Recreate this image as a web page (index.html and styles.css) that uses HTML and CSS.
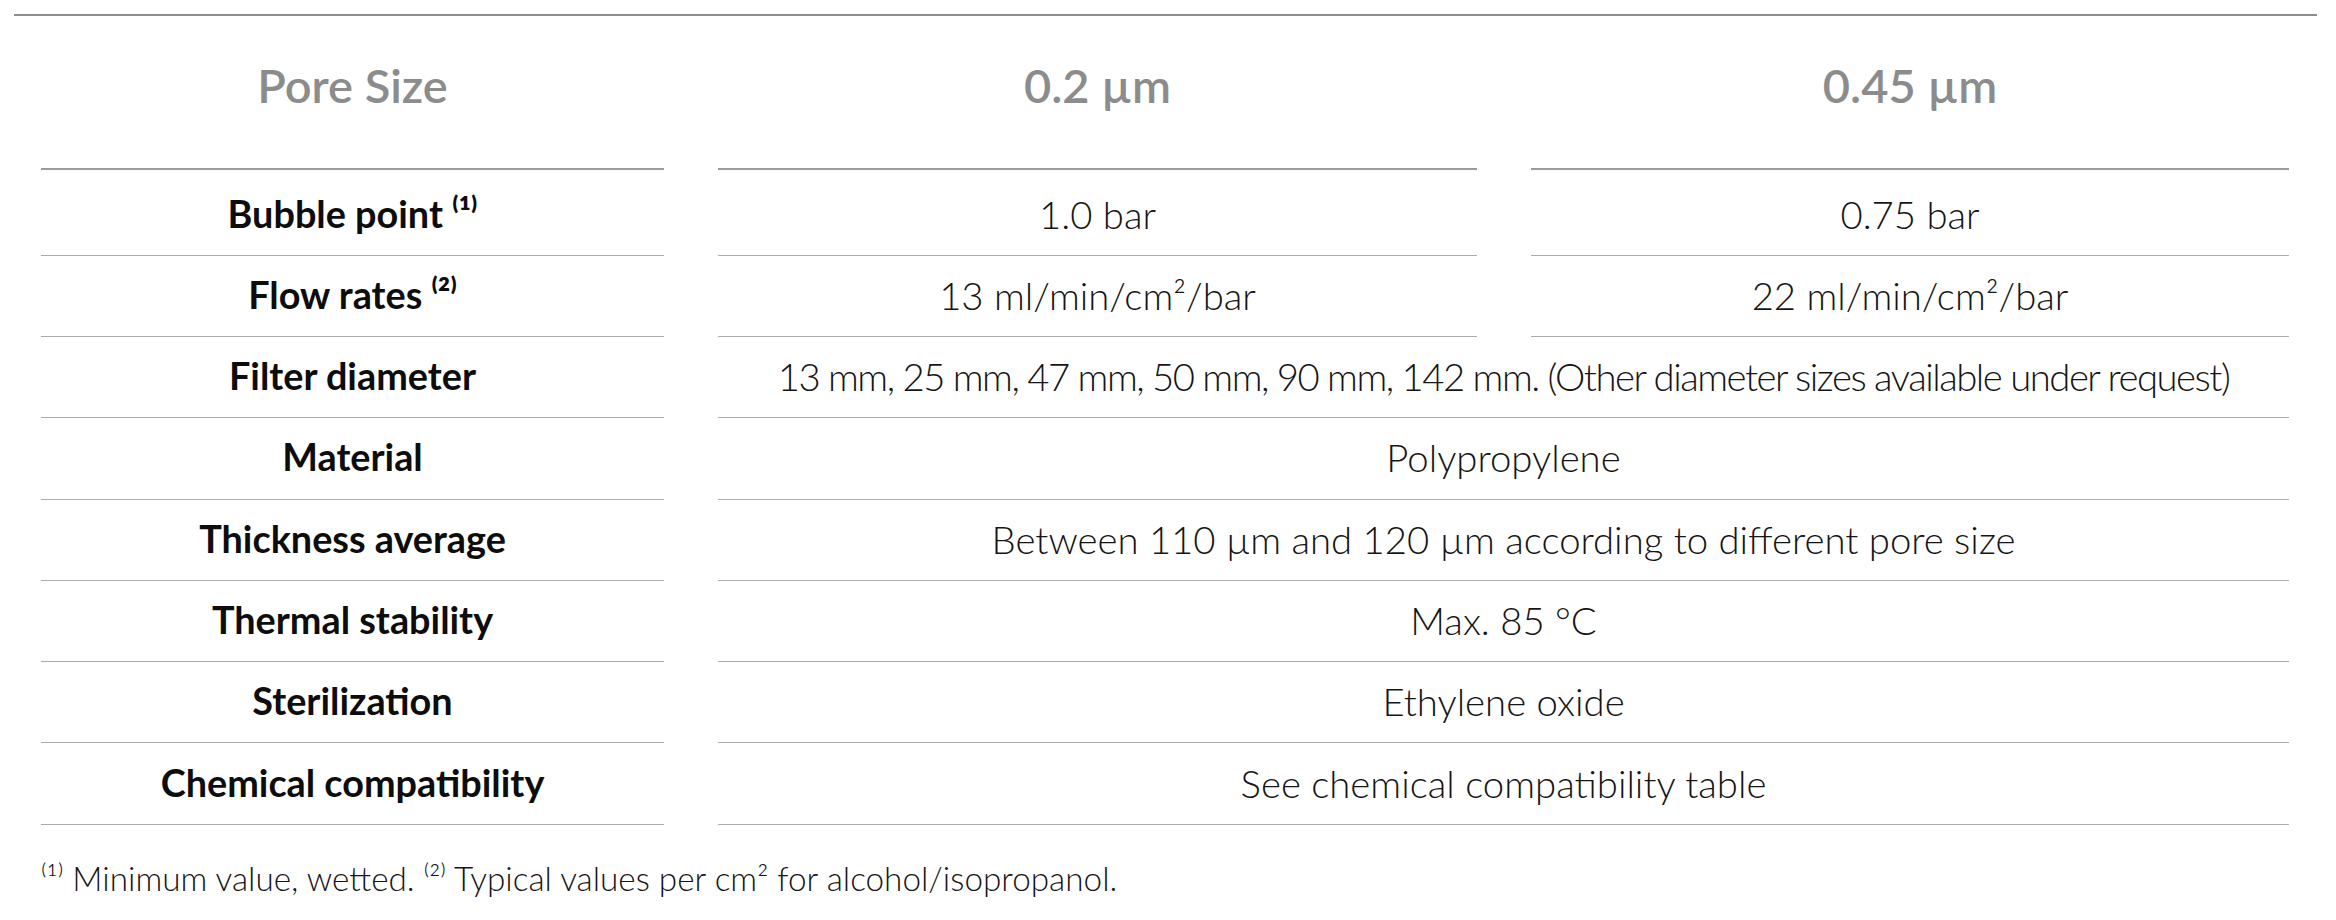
FILE: index.html
```html
<!DOCTYPE html>
<html lang="en">
<head>
<meta charset="utf-8">
<title>Pore Size Specifications</title>
<link rel="stylesheet" href="styles.css">
</head>
<body>
<div class="spec">
  <div class="grid">
    <div class="th">Pore Size</div>
    <div class="th">0.2 µm</div>
    <div class="th">0.45 µm</div>

    <div class="lbl first">Bubble point ⁽¹⁾</div>
    <div class="val first">1.0 bar</div>
    <div class="val first">0.75 bar</div>

    <div class="lbl">Flow rates ⁽²⁾</div>
    <div class="val">13 ml/min/cm²/bar</div>
    <div class="val">22 ml/min/cm²/bar</div>

    <div class="lbl">Filter diameter</div>
    <div class="val span tight">13 mm, 25 mm, 47 mm, 50 mm, 90 mm, 142 mm. (Other diameter sizes available under request)</div>

    <div class="lbl">Material</div>
    <div class="val span">Polypropylene</div>

    <div class="lbl">Thickness average</div>
    <div class="val span">Between 110 µm and 120 µm according to different pore size</div>

    <div class="lbl">Thermal stability</div>
    <div class="val span">Max. 85 °C</div>

    <div class="lbl">Sterilization</div>
    <div class="val span">Ethylene oxide</div>

    <div class="lbl">Chemical compatibility</div>
    <div class="val span">See chemical compatibility table</div>
  </div>
  <p class="note">⁽¹⁾ Minimum value, wetted. ⁽²⁾ Typical values per cm² for alcohol/isopropanol.</p>
</div>
</body>
</html>
```

FILE: styles.css
```css
html, body {
  margin: 0;
  padding: 0;
  background: #ffffff;
}

body {
  font-family: Lato, "Noto Sans", "Liberation Sans", sans-serif;
  color: #111111;
}

.spec {
  margin: 14px 0 0 14px;
  width: 2303px;
  border-top: 2px solid #8e8e8e;
}

.grid {
  display: grid;
  grid-template-columns: 623px 759px 758px;
  column-gap: 54px;
  padding: 0 27px;
}

.th {
  padding: 39px 0 53px;
  line-height: 60px;
  font-size: 47px;
  font-weight: 600;
  color: #8c8c8c;
  text-align: center;
  border-bottom: 2px solid #9a9a9a;
}

.lbl,
.val {
  display: flex;
  align-items: center;
  justify-content: center;
  text-align: center;
  height: 78.3px;
  padding-bottom: 2px;
  line-height: 48px;
  border-bottom: 1px solid #ababab;
  white-space: nowrap;
}

.first {
  height: 78px;
  padding-top: 4.7px;
}

.lbl {
  font-size: 37.8px;
  font-weight: 700;
  color: #0d0d0d;
}

.val {
  font-size: 38.3px;
  font-weight: 300;
  color: #151515;
}

.tight {
  letter-spacing: -1.5px;
}

.span {
  grid-column: 2 / 4;
}

.note {
  margin: 34px 0 0 27px;
  font-size: 33.3px;
  line-height: 38px;
  font-weight: 300;
  color: #151515;
}
```
